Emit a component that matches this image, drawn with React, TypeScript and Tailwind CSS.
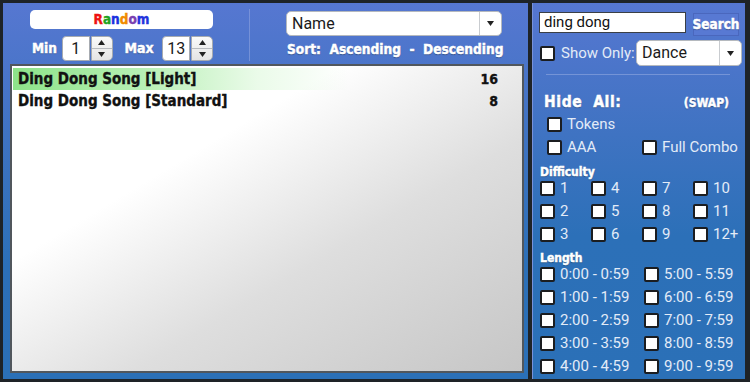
import React from "react";

const head = "font-['DejaVu_Sans_Condensed','DejaVu_Sans',sans-serif] font-bold font-stretch-condensed text-white [-webkit-text-stroke:0.45px_white] [text-shadow:0_1px_1px_rgba(0,0,0,0.35)]";
const body = "font-['Roboto','Liberation_Sans',sans-serif]";
const listFont = "font-['DejaVu_Sans_Condensed','DejaVu_Sans',sans-serif] font-bold font-stretch-condensed text-[#111] [-webkit-text-stroke:0.35px_#111]";

function Tri({ up = false }: { up?: boolean }) {
  return (
    <svg width="7" height="5" viewBox="0 0 7 5">
      <path d={up ? "M0 5 L3.5 0 L7 5 Z" : "M0 0 L7 0 L3.5 5 Z"} fill="#222" />
    </svg>
  );
}

function Box() {
  return <span className="block w-[15px] h-[15px] shrink-0 bg-white border-2 border-[#1b1d20] rounded-[2px]" />;
}

function Check({ label, className = "" }: { label: string; className?: string }) {
  return (
    <div className={`flex items-center h-[23px] ${className}`}>
      <Box />
      <span className={`${body} ml-[5px] text-[15px] text-[#e3ebf7] leading-none`}>{label}</span>
    </div>
  );
}

function Spinner() {
  return (
    <div className="ml-[1px] w-[22px] h-[25px] flex flex-col border border-[#a7abb0] rounded-r-[5px] bg-gradient-to-b from-[#fafafa] to-[#e4e4e4] overflow-hidden">
      <div className="flex-1 flex items-center justify-center border-b border-[#b8bbbf]"><Tri up /></div>
      <div className="flex-1 flex items-center justify-center"><Tri /></div>
    </div>
  );
}

function Select({ value, className = "" }: { value: string; className?: string }) {
  return (
    <div className={`flex bg-white border border-[#b5b9be] rounded-[5px] ${className}`}>
      <div className={`${body} flex-1 flex items-center pl-[5px] text-[16px] text-[#1a1a1a]`}>{value}</div>
      <div className="w-[22px] border-l border-[#c9ccd0] flex items-center justify-center"><Tri /></div>
    </div>
  );
}

const songs = [
  { name: "Ding Dong Song [Light]", level: 16, active: true },
  { name: "Ding Dong Song [Standard]", level: 8, active: false },
];

const difficulty = ["1", "4", "7", "10", "2", "5", "8", "11", "3", "6", "9", "12+"];
const lengths = [
  "0:00 - 0:59", "5:00 - 5:59",
  "1:00 - 1:59", "6:00 - 6:59",
  "2:00 - 2:59", "7:00 - 7:59",
  "3:00 - 3:59", "8:00 - 8:59",
  "4:00 - 4:59", "9:00 - 9:59",
];

export default function App() {
  return (
    <div className="w-[750px] h-[382px] bg-[#1e2327] pt-[3px] pl-[3px] flex gap-[4px] overflow-hidden">
      {/* left: list */}
      <div className="w-[525px] h-[376px] flex flex-col bg-[linear-gradient(to_bottom,#5677d1_0%,#3f73c2_35%,#2c70b8_70%,#2b70b7_100%)]">
        <div className="h-[61px] flex items-start">
          <div className="ml-[27px] w-[183px]">
            <div className="mt-[7px] h-[19px] bg-white rounded-[5px] flex items-center justify-center text-[13.5px] font-['DejaVu_Sans_Condensed','DejaVu_Sans',sans-serif] font-bold font-stretch-condensed [-webkit-text-stroke:0.4px_currentColor]">
              <span className="text-[#ee1111]">R</span>
              <span className="text-[#1fa31f]">a</span>
              <span className="text-[#1a2fe0]">n</span>
              <span className="text-[#f08a00]">d</span>
              <span className="text-[#7a3fb0]">o</span>
              <span className="text-[#2233dd]">m</span>
            </div>
            <div className="mt-[7px] flex items-center h-[25px]">
              <span className={`${head} ml-[2px] w-[30px] text-[13.5px]`}>Min</span>
              <div className={`${body} w-[28px] h-[25px] bg-white border border-[#a7abb0] rounded-l-[4px] flex items-center justify-center text-[16px] text-[#1a1a1a]`}>1</div>
              <Spinner />
              <span className={`${head} ml-[12px] w-[38px] text-[14px]`}>Max</span>
              <div className={`${body} w-[28px] h-[25px] bg-white border border-[#a7abb0] rounded-l-[4px] flex items-center justify-center text-[16px] text-[#1a1a1a]`}>13</div>
              <Spinner />
            </div>
          </div>
          <div className="ml-[36px] mt-[6px] w-px h-[52px] bg-[#8ea3e0]/60" />
          <div className="ml-[36px] w-[216px]">
            <Select value="Name" className="mt-[8px] h-[25px]" />
            <div className={`${head} mt-[7px] ml-[1px] text-[13.6px] whitespace-pre leading-none`}>Sort:  Ascending  -  Descending</div>
          </div>
        </div>
        <div className="ml-[7px] w-[514px] h-[309px] border-[2px] border-[#51575d] pt-[2px] px-[1px] bg-[linear-gradient(to_bottom_right,#ffffff_0%,#ffffff_32%,#dedede_62%,#c6c6c6_100%)]">
          {songs.map((s) => (
            <div
              key={s.name}
              className={`h-[22px] flex items-center pl-[5px] pr-[23px] ${
                s.active ? "bg-[linear-gradient(to_right,#8de389_0%,#b6efb3_25%,rgba(220,248,218,0.6)_48%,rgba(255,255,255,0)_66%)]" : ""
              }`}
            >
              <span className={`${listFont} text-[15px]`}>{s.name}</span>
              <span className={`${listFont} ml-auto text-[14px]`}>{s.level}</span>
            </div>
          ))}
        </div>
      </div>

      {/* right: filters */}
      <div className="w-[213px] h-[376px] flex flex-col pt-[9px] px-[6px] border-l border-[#7891da] bg-[linear-gradient(to_bottom,#5677d1_0%,#3f73c2_35%,#2c70b8_62%,#2b70b7_100%)]">
        <div className="flex items-start h-[24px]">
          <div className={`${body} w-[150px] h-[21px] bg-white border border-[#3a3f45] flex items-center pl-[4px] text-[15px] text-[#111]`}>ding dong</div>
          <div className={`${head} ml-[7px] mt-[1px] w-[46px] h-[23px] bg-[#5879d3] border border-[#4a67bd] flex items-center justify-center text-[13.5px]`}>Search</div>
        </div>
        <div className="mt-[4px] h-[26px] flex items-center">
          <span className="ml-[1px]"><Box /></span>
          <span className={`${body} ml-[6px] text-[15px] text-[#e3ebf7]`}>Show Only:</span>
          <Select value="Dance" className="ml-auto -mr-[3px] w-[106px] h-[26px]" />
        </div>
        <div className="mt-[8px] ml-[7px] mr-[9px] h-px bg-[#9fb3e6]/50" />
        <div className="mt-[19px] h-[18px] flex items-center">
          <span className={`${head} ml-[5px] text-[15.5px] tracking-[0.6px] whitespace-pre`}>Hide  All:</span>
          <span className={`${head} ml-auto mr-[10px] text-[12px]`}>(SWAP)</span>
        </div>
        <Check label="Tokens" className="mt-[1px] ml-[8px]" />
        <div className="ml-[8px] grid grid-cols-[95px_1fr]">
          <Check label="AAA" />
          <Check label="Full Combo" />
        </div>
        <div className={`${head} mt-[8px] ml-[1px] h-[11px] leading-[11px] text-[12px]`}>Difficulty</div>
        <div className="ml-[1px] -mt-[1px] grid grid-cols-[51px_51px_51px_1fr]">
          {difficulty.map((d) => (
            <Check key={d} label={d} className="h-[22.5px]" />
          ))}
        </div>
        <div className={`${head} mt-[7px] ml-[1px] h-[11px] leading-[11px] text-[12px]`}>Length</div>
        <div className="ml-[1px] -mt-[1px] grid grid-cols-[104px_1fr]">
          {lengths.map((l) => (
            <Check key={l} label={l} />
          ))}
        </div>
      </div>
    </div>
  );
}
